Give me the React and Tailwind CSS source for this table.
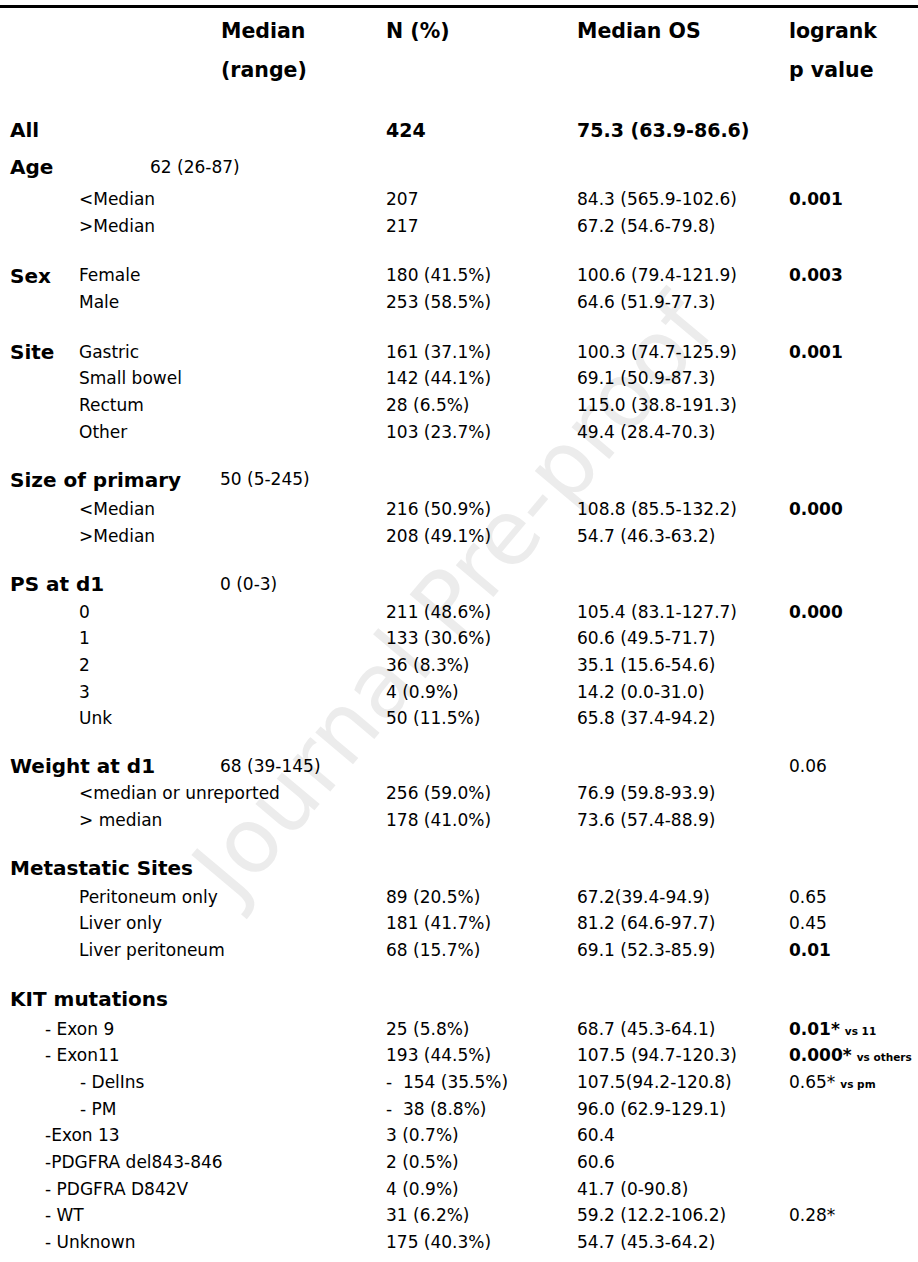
const sections = [
  {
    title: "Age",
    range: "62 (26-87)",
    rangeAt: "w-[150px]",
    rows: [
      { label: "<Median", n: "207", os: "84.3 (565.9-102.6)", p: "0.001", bold: true },
      { label: ">Median", n: "217", os: "67.2 (54.6-79.8)" },
    ],
  },
  {
    title: "Sex",
    inline: true,
    rows: [
      { label: "Female", n: "180 (41.5%)", os: "100.6 (79.4-121.9)", p: "0.003", bold: true },
      { label: "Male", n: "253 (58.5%)", os: "64.6 (51.9-77.3)" },
    ],
  },
  {
    title: "Site",
    inline: true,
    rows: [
      { label: "Gastric", n: "161 (37.1%)", os: "100.3 (74.7-125.9)", p: "0.001", bold: true },
      { label: "Small bowel", n: "142 (44.1%)", os: "69.1 (50.9-87.3)" },
      { label: "Rectum", n: "28 (6.5%)", os: "115.0 (38.8-191.3)" },
      { label: "Other", n: "103 (23.7%)", os: "49.4 (28.4-70.3)" },
    ],
  },
  {
    title: "Size of primary",
    range: "50 (5-245)",
    gap: "mt-[17px]",
    head: "h-[34px]",
    rows: [
      { label: "<Median", n: "216 (50.9%)", os: "108.8 (85.5-132.2)", p: "0.000", bold: true },
      { label: ">Median", n: "208 (49.1%)", os: "54.7 (46.3-63.2)" },
    ],
  },
  {
    title: "PS at d1",
    range: "0 (0-3)",
    gap: "mt-[20px]",
    head: "h-[29px]",
    rows: [
      { label: "0", n: "211 (48.6%)", os: "105.4 (83.1-127.7)", p: "0.000", bold: true },
      { label: "1", n: "133 (30.6%)", os: "60.6 (49.5-71.7)" },
      { label: "2", n: "36 (8.3%)", os: "35.1 (15.6-54.6)" },
      { label: "3", n: "4 (0.9%)", os: "14.2 (0.0-31.0)" },
      { label: "Unk", n: "50 (11.5%)", os: "65.8 (37.4-94.2)" },
    ],
  },
  {
    title: "Weight at d1",
    range: "68 (39-145)",
    headP: "0.06",
    gap: "mt-[20px]",
    head: "h-[28px]",
    rows: [
      { label: "<median or unreported", n: "256 (59.0%)", os: "76.9 (59.8-93.9)" },
      { label: "> median", n: "178 (41.0%)", os: "73.6 (57.4-88.9)" },
    ],
  },
  {
    title: "Metastatic Sites",
    gap: "mt-[18px]",
    head: "h-[32px]",
    rows: [
      { label: "Peritoneum only", n: "89 (20.5%)", os: "67.2(39.4-94.9)", p: "0.65" },
      { label: "Liver only", n: "181 (41.7%)", os: "81.2 (64.6-97.7)", p: "0.45" },
      { label: "Liver peritoneum", n: "68 (15.7%)", os: "69.1 (52.3-85.9)", p: "0.01", bold: true },
    ],
  },
  {
    title: "KIT mutations",
    gap: "mt-[18px]",
    head: "h-[34px]",
    rows: [
      { label: "- Exon 9", pad: "pl-[45px]", n: "25 (5.8%)", os: "68.7 (45.3-64.1)", p: "0.01*", bold: true, note: "vs 11" },
      { label: "- Exon11", pad: "pl-[45px]", n: "193 (44.5%)", os: "107.5 (94.7-120.3)", p: "0.000*", bold: true, note: "vs others" },
      { label: "- DelIns", pad: "pl-[80px]", n: "-  154 (35.5%)", os: "107.5(94.2-120.8)", p: "0.65*", note: "vs pm" },
      { label: "- PM", pad: "pl-[80px]", n: "-  38 (8.8%)", os: "96.0 (62.9-129.1)" },
      { label: "-Exon 13", pad: "pl-[45px]", n: "3 (0.7%)", os: "60.4" },
      { label: "-PDGFRA del843-846", pad: "pl-[45px]", n: "2 (0.5%)", os: "60.6" },
      { label: "- PDGFRA D842V", pad: "pl-[45px]", n: "4 (0.9%)", os: "41.7 (0-90.8)" },
      { label: "- WT", pad: "pl-[45px]", n: "31 (6.2%)", os: "59.2 (12.2-106.2)", p: "0.28*" },
      { label: "- Unknown", pad: "pl-[45px]", n: "175 (40.3%)", os: "54.7 (45.3-64.2)" },
    ],
  },
];

const cols = "grid grid-cols-[386px_191px_212px_1fr] items-center";

function PValue({ row }) {
  if (!row.p) return <div />;
  return (
    <div className="whitespace-nowrap">
      <span className={row.bold ? "font-bold" : ""}>{row.p}</span>
      {row.note && <span className="ml-[5px] text-[10.5px] font-bold">{row.note}</span>}
    </div>
  );
}

function Row({ row, title }) {
  return (
    <div className={`${cols} h-[26.7px] leading-none`}>
      <div className="flex items-center">
        {title !== undefined && (
          <span className="w-[79px] pl-[10px] text-[20px] font-bold">{title}</span>
        )}
        <span className={`whitespace-pre ${title !== undefined ? "" : row.pad || "pl-[79px]"}`}>
          {row.label}
        </span>
      </div>
      <div className="whitespace-pre">{row.n}</div>
      <div className="whitespace-nowrap">{row.os}</div>
      <PValue row={row} />
    </div>
  );
}

function Section({ s }) {
  if (s.inline) {
    return (
      <div className="mt-[23px]">
        {s.rows.map((r, i) => (
          <Row key={i} row={r} title={i === 0 ? s.title : ""} />
        ))}
      </div>
    );
  }
  return (
    <div className={s.gap || ""}>
      <div className={`${cols} ${s.head || "h-[38px]"} leading-none`}>
        <div className="flex items-center">
          <span className={`${s.rangeAt || "w-[220px]"} pl-[10px] text-[20px] font-bold whitespace-nowrap`}>
            {s.title}
          </span>
          {s.range && <span className="whitespace-nowrap">{s.range}</span>}
        </div>
        <div />
        <div />
        <div>{s.headP}</div>
      </div>
      {s.rows.map((r, i) => (
        <Row key={i} row={r} />
      ))}
    </div>
  );
}

export default function App() {
  return (
    <div
      className="relative w-[918px] h-[1262px] overflow-hidden bg-white text-black text-[17px] pt-[5px]"
      style={{ fontFamily: "'DejaVu Sans', 'Open Sans', sans-serif" }}
    >
      {/* watermark */}
      <div className="pointer-events-none absolute left-[453px] top-[597px] -translate-x-1/2 -translate-y-1/2 -rotate-[50deg] whitespace-nowrap text-[90px] leading-none text-[#ececec]">
        Journal Pre-proof
      </div>

      <div className="relative">
        <div className="border-t-[3px] border-black" />

        <div className={`${cols} items-start pt-[4px] text-[20.5px] font-bold leading-[39px]`}>
          <div className="pl-[221px]">
            Median
            <br />
            (range)
          </div>
          <div>N (%)</div>
          <div>Median OS</div>
          <div>
            logrank
            <br />
            p value
          </div>
        </div>

        <div className={`${cols} mt-[22px] h-[36px] text-[19px] font-bold leading-none`}>
          <div className="pl-[10px] text-[20px]">All</div>
          <div>424</div>
          <div>75.3 (63.9-86.6)</div>
          <div />
        </div>

        {sections.map((s, i) => (
          <Section key={i} s={s} />
        ))}
      </div>
    </div>
  );
}
